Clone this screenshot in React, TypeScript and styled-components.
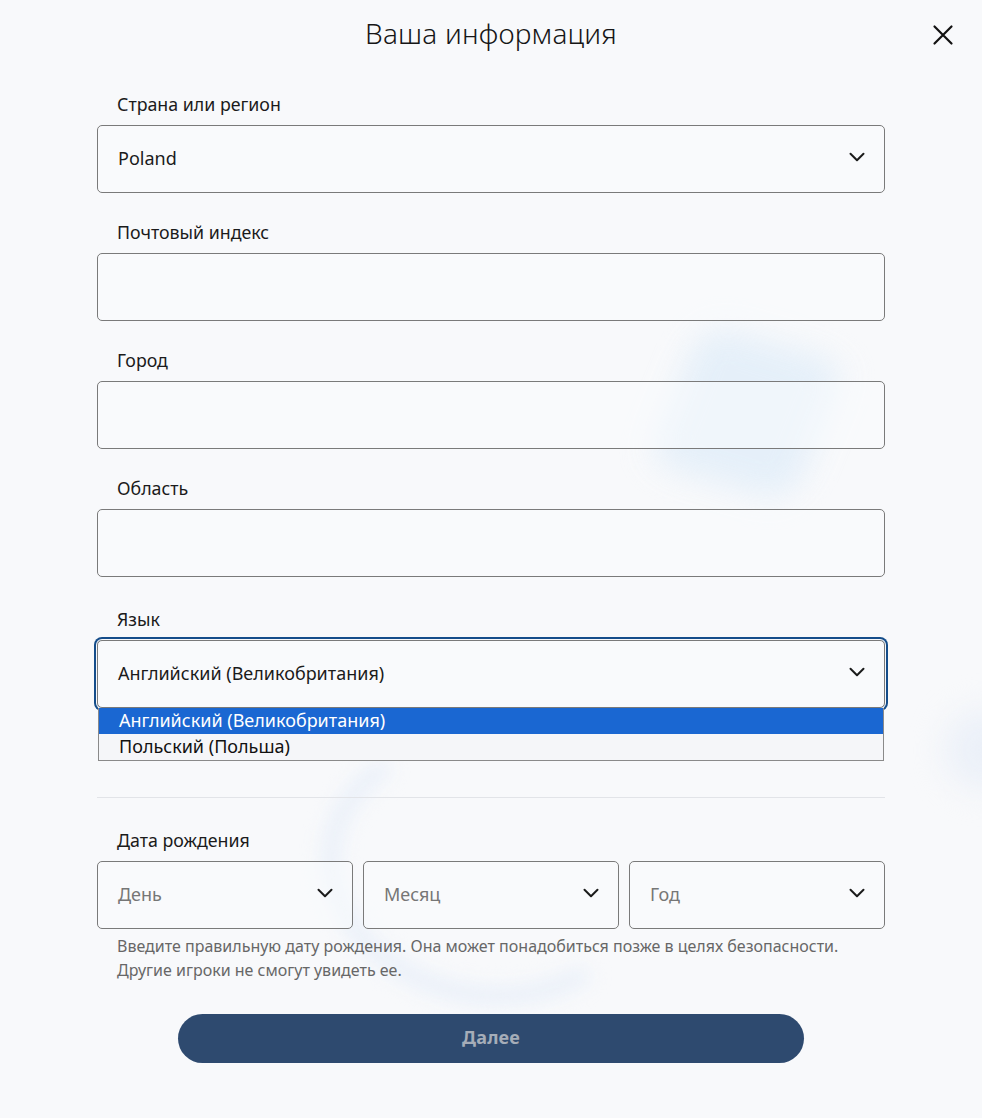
import React from "react";
import styled, { createGlobalStyle } from "styled-components";

const GlobalStyle = createGlobalStyle`
  html, body {
    margin: 0;
    padding: 0;
    background: #f8f9fb;
  }
  body {
    font-family: "Noto Sans", "Open Sans", Arial, sans-serif;
    color: #1b1b1b;
  }
  * { box-sizing: border-box; }
`;

const Page = styled.div`
  position: relative;
  width: 100%;
  min-height: 1118px;
  overflow: hidden;
  background: #f8f9fb;
`;

/* soft decorative shapes painted behind the form */
const Glow = styled.div<{ $variant: "card" | "ring" | "edge" }>`
  position: absolute;
  pointer-events: none;
  z-index: 0;
  ${({ $variant }) =>
    $variant === "card"
      ? `
    left: 672px; top: 338px; width: 150px; height: 150px;
    border-radius: 28px;
    background: #e2eef9;
    transform: rotate(16deg) skewX(-6deg);
    filter: blur(16px);
    opacity: 0.85;
  `
      : $variant === "ring"
      ? `
    left: 322px; top: 735px; width: 330px; height: 268px;
    border-radius: 50%;
    border: 16px solid #e8eff9;
    border-right-color: transparent;
    border-top-color: transparent;
    transform: rotate(10deg);
    filter: blur(10px);
  `
      : `
    left: 945px; top: 710px; width: 80px; height: 80px;
    border-radius: 50%;
    background: #ebf0f8;
    filter: blur(16px);
  `}
`;

const Header = styled.header`
  position: relative;
  z-index: 1;
  display: grid;
  grid-template-columns: 1fr auto 1fr;
  align-items: center;
  height: 66px;
`;

const Title = styled.h1`
  grid-column: 2;
  margin: 0;
  font-size: 28px;
  font-weight: 300;
  letter-spacing: 0.2px;
  color: #161616;
`;

const CloseButton = styled.button`
  grid-column: 3;
  justify-self: end;
  margin-right: 24px;
  margin-top: 4px;
  width: 30px;
  height: 30px;
  display: flex;
  align-items: center;
  justify-content: center;
  border: 0;
  padding: 0;
  background: transparent;
  color: #111;
  cursor: pointer;
`;

const Form = styled.form`
  position: relative;
  z-index: 1;
  width: 788px;
  margin: 26px auto 0;
  display: flex;
  flex-direction: column;
`;

const Field = styled.div<{ $shift?: number; $last?: boolean }>`
  display: flex;
  flex-direction: column;
  gap: 9px;
  margin-bottom: ${({ $last }) => ($last ? 0 : 27)}px;
  margin-top: ${({ $shift }) => $shift ?? 0}px;
`;

const Label = styled.label`
  padding-left: 20px;
  font-size: 17.8px;
  line-height: 24px;
  color: #1b1b1b;
`;

const Box = styled.div<{ $focused?: boolean }>`
  position: relative;
  height: 68px;
  display: flex;
  align-items: center;
  justify-content: space-between;
  padding: 0 19px 0 20px;
  border: 1px solid #7a7a7a;
  border-radius: 5px;
  background: rgba(250, 251, 253, 0.55);
  ${({ $focused }) =>
    $focused &&
    `
    box-shadow: 0 0 0 1px #f8f9fb, 0 0 0 3px #154d8a;
  `}
`;

const Value = styled.span<{ $placeholder?: boolean }>`
  font-size: 18px;
  line-height: 24px;
  margin-top: -2px;
  color: ${({ $placeholder }) => ($placeholder ? "#767676" : "#1b1b1b")};
`;

const Chevron = styled.svg`
  width: 16px;
  height: 10px;
  margin-top: -5px;
  flex: none;
`;

const OptionList = styled.ul`
  position: absolute;
  top: calc(100% + 1px);
  left: 0;
  right: 0;
  margin: 0;
  padding: 0;
  list-style: none;
  border: 1px solid #8a8a8a;
  border-top: 0;
  background: #f5f6f9;
  z-index: 3;
`;

const Option = styled.li<{ $active?: boolean }>`
  height: 26px;
  padding-left: 20px;
  font-size: 18px;
  line-height: 25px;
  color: ${({ $active }) => ($active ? "#ffffff" : "#111")};
  background: ${({ $active }) => ($active ? "#1a67d2" : "transparent")};
`;

const Divider = styled.hr`
  margin: 89px 0 0;
  border: 0;
  border-top: 1px solid #e2e4e8;
`;

const DateField = styled.div`
  display: flex;
  flex-direction: column;
  gap: 9px;
  margin-top: 30px;
`;

const DateRow = styled.div`
  display: grid;
  grid-template-columns: repeat(3, 1fr);
  gap: 10px;
`;

const Hint = styled.p`
  margin: 5px 0 0;
  padding-left: 20px;
  font-size: 16px;
  line-height: 24px;
  color: #676767;
`;

const Submit = styled.button`
  align-self: center;
  width: 626px;
  height: 49px;
  margin-top: 32px;
  padding: 0 0 3px;
  border: 0;
  border-radius: 25px;
  background: #2e4a6f;
  color: #a5adb8;
  font-family: "Noto Sans", "Open Sans", Arial, sans-serif;
  font-size: 18px;
  font-weight: 700;
  letter-spacing: 0.2px;
`;

const ChevronDown = () => (
  <Chevron viewBox="0 0 16 10" fill="none">
    <path d="M1.5 1.8 8 8.2l6.5-6.4" stroke="#1b1b1b" strokeWidth="2" strokeLinecap="round" strokeLinejoin="round" />
  </Chevron>
);

const CloseIcon = () => (
  <svg width="22" height="22" viewBox="0 0 22 22" fill="none">
    <path d="M2.5 2.5l17 17M19.5 2.5l-17 17" stroke="#111" strokeWidth="2.2" strokeLinecap="round" />
  </svg>
);

type SelectProps = { value: string; placeholder?: boolean };

const SelectBox = ({ value, placeholder }: SelectProps) => (
  <Box>
    <Value $placeholder={placeholder}>{value}</Value>
    <ChevronDown />
  </Box>
);

const TextField = ({ label }: { label: string }) => (
  <Field>
    <Label>{label}</Label>
    <Box />
  </Field>
);

const languages = ["Английский (Великобритания)", "Польский (Польша)"];

export default function App() {
  return (
    <Page>
      <GlobalStyle />
      <Glow $variant="card" />
      <Glow $variant="ring" />
      <Glow $variant="edge" />

      <Header>
        <Title>Ваша информация</Title>
        <CloseButton type="button" aria-label="Закрыть">
          <CloseIcon />
        </CloseButton>
      </Header>

      <Form onSubmit={(e) => e.preventDefault()}>
        <Field>
          <Label>Страна или регион</Label>
          <SelectBox value="Poland" />
        </Field>

        <TextField label="Почтовый индекс" />
        <TextField label="Город" />
        <TextField label="Область" />

        <Field $shift={3} $last>
          <Label>Язык</Label>
          <Box $focused>
            <Value>{languages[0]}</Value>
            <ChevronDown />
            <OptionList role="listbox">
              {languages.map((lang, i) => (
                <Option key={lang} $active={i === 0}>
                  {lang}
                </Option>
              ))}
            </OptionList>
          </Box>
        </Field>

        <Divider />

        <DateField>
          <Label>Дата рождения</Label>
          <DateRow>
            <SelectBox value="День" placeholder />
            <SelectBox value="Месяц" placeholder />
            <SelectBox value="Год" placeholder />
          </DateRow>
        </DateField>

        <Hint>
          Введите правильную дату рождения. Она может понадобиться позже в целях безопасности.
          <br />
          Другие игроки не смогут увидеть ее.
        </Hint>

        <Submit type="submit">Далее</Submit>
      </Form>
    </Page>
  );
}
